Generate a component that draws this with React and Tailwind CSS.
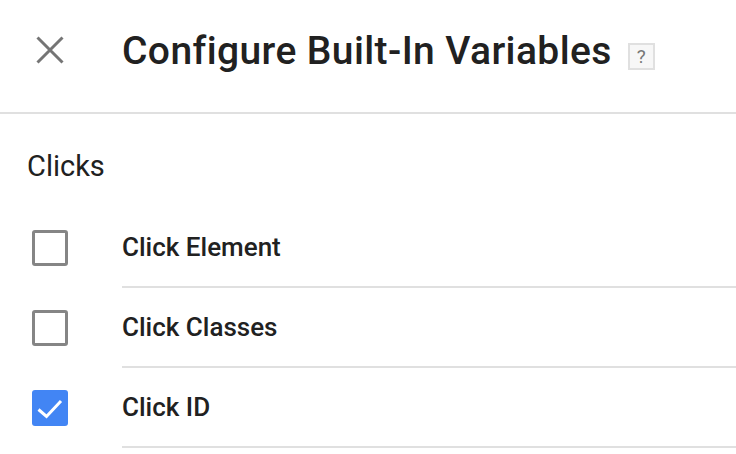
import React, { useState } from 'react';

const variables = [
  { id: 'element', label: 'Click Element', checked: false },
  { id: 'classes', label: 'Click Classes', checked: false },
  { id: 'id', label: 'Click ID', checked: true },
];

const CloseIcon = () => (
  <svg width="28" height="28" viewBox="0 0 28 28" fill="none">
    <path d="M1.5 1.5L26.5 26.5M26.5 1.5L1.5 26.5" stroke="#757575" strokeWidth="3" />
  </svg>
);

const Checkbox = ({ checked, onChange }) => (
  <button
    onClick={onChange}
    className={
      checked
        ? 'w-[36px] h-[36px] rounded-[3px] bg-[#4285f4] flex items-center justify-center'
        : 'w-[36px] h-[36px] rounded-[3px] border-[3px] border-[#858585] bg-white'
    }
  >
    {checked && (
      <svg width="36" height="36" viewBox="0 0 36 36" fill="none">
        <path d="M6.5 19.5L14.5 26.5L29 11" stroke="white" strokeWidth="3" />
      </svg>
    )}
  </button>
);

const App = () => {
  const [items, setItems] = useState(variables);

  const toggle = (id) => {
    setItems(items.map(item => (item.id === id ? { ...item, checked: !item.checked } : item)));
  };

  return (
    <div
      className="w-[736px] h-[454px] bg-white overflow-hidden text-[#212121]"
      style={{ fontFamily: 'Roboto, "Liberation Sans", sans-serif' }}
    >
      {/* Header */}
      <div className="h-[114px] flex items-start border-b-2 border-[#e0e0e0]">
        <div className="w-[122px] pl-[36px] mt-[36px] flex">
          <CloseIcon />
        </div>
        <h1 className="mt-[32px] text-[39px] leading-none font-medium tracking-[0.4px]">
          Configure Built-In Variables
        </h1>
        <span className="ml-[16px] mt-[43px] w-[27px] h-[27px] border-2 border-[#e0e0e0] bg-[#f7f7f7] text-[#777] text-[19px] leading-none flex items-center justify-center">
          ?
        </span>
      </div>

      {/* Section */}
      <div className="h-[94px] pl-[27px] pt-[34px]">
        <h2 className="text-[29px] leading-[36px]">Clicks</h2>
      </div>

      {items.map(item => (
        <div key={item.id} className="flex h-[80px]">
          <div className="w-[122px] pl-[32px] flex items-center">
            <Checkbox checked={item.checked} onChange={() => toggle(item.id)} />
          </div>
          <div className="flex-1 flex items-center border-b-2 border-[#e0e0e0] text-[26px] font-medium">
            {item.label}
          </div>
        </div>
      ))}
    </div>
  );
};

export default App;
